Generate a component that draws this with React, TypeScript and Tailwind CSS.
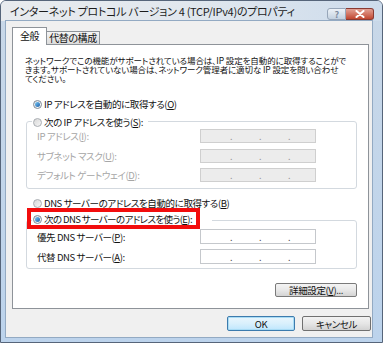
import React from "react";

function Radio({ on }: { on?: boolean }) {
  return (
    <span
      className={
        on
          ? "flex h-[9px] w-[9px] shrink-0 items-center justify-center rounded-full border border-[#7f8a96] bg-gradient-to-br from-[#dfe3e8] to-[#ffffff]"
          : "flex h-[9px] w-[9px] shrink-0 items-center justify-center rounded-full border border-[#a9adb2] bg-gradient-to-br from-[#d8d8d8] to-[#f6f6f6]"
      }
    >
      {on && <span className="h-[5px] w-[5px] rounded-full bg-gradient-to-br from-[#7ccaf5] to-[#1a5ea8]" />}
    </span>
  );
}

function IpField({ dim, tall }: { dim?: boolean; tall?: boolean }) {
  const base = dim
    ? "flex w-[116px] shrink-0 items-end gap-[27px] border border-[#cfcfcf] bg-[#ececec] pb-[1px] pl-[29px] text-[9px] leading-[9px] text-[#9a9a9a]"
    : "flex w-[116px] shrink-0 items-end gap-[27px] border border-[#c5c8cc] bg-white pb-[1px] pl-[29px] text-[9px] leading-[9px] text-[#555]";
  return (
    <div className={base + (tall ? " h-[15px]" : " h-[14px]")}>
      <span className="w-[2px]">.</span>
      <span className="w-[2px]">.</span>
      <span className="w-[2px]">.</span>
    </div>
  );
}

function Key({ k }: { k: string }) {
  return <span className="underline decoration-[0.5px] underline-offset-[1px]">{k}</span>;
}

function Row({ label, dim, tall, mt }: { label: React.ReactNode; dim?: boolean; tall?: boolean; mt: string }) {
  return (
    <div className={"flex items-center " + mt}>
      <span className={dim ? "w-[173px] shrink-0 pl-[10px] text-[#a6a6a6]" : "w-[173px] shrink-0 pl-[10px] text-[#111]"}>{label}</span>
      <IpField dim={dim} tall={tall} />
    </div>
  );
}

export default function App() {
  return (
    <div className="h-[343px] w-[383px] overflow-hidden whitespace-nowrap bg-white font-['Noto_Sans_CJK_JP','Noto_Sans',sans-serif] text-[9.5px] leading-[12px] tracking-[-0.4px] text-[#111] [font-feature-settings:'palt']">
      <div className="flex h-full w-full flex-col rounded-t-[6px] border border-[#56657a] bg-gradient-to-b from-[#c9d8e8] to-[#bcd3ec]">
        {/* title bar */}
        <div className="flex h-[20px] shrink-0 items-start rounded-t-[5px] bg-gradient-to-r from-[#e8ebee] via-[#e1e7ee] to-[#cddcec] pl-[9px] pr-[8px]">
          <span className="mt-[3px] min-w-0 overflow-hidden text-[11px] leading-[14px] tracking-[-0.3px] text-[#1c1c1c]">
            インターネット プロトコル バージョン 4 (TCP/IPv4)のプロパティ
          </span>
          <div className="ml-auto mt-[7px] flex shrink-0">
            <div className="flex h-[12px] w-[19px] items-center justify-center rounded-l-[3px] border border-[#97a6b9] bg-gradient-to-b from-[#eef3f8] to-[#c3d1e0] text-[9px] font-bold leading-[9px] text-[#7d8ca0]">
              ?
            </div>
            <div className="flex h-[12px] w-[28px] items-center justify-center rounded-r-[3px] border border-l-0 border-[#8a3a32] bg-gradient-to-b from-[#e2a195] to-[#c0452f]">
              <svg width="10" height="8" viewBox="0 0 10 8">
                <path d="M1.5 1 L8.5 7 M8.5 1 L1.5 7" stroke="#ffffff" strokeWidth="2" strokeLinecap="round" />
              </svg>
            </div>
          </div>
        </div>

        {/* frame around client */}
        <div className="flex flex-1 pb-[5px] pl-[5px] pr-[10px]">
          <div className="flex w-full flex-col bg-[#f0f0f0] pl-[6px] pr-[3px] pt-[6px] shadow-[0_0_0_1px_#93aac3]">
            {/* tabs */}
            <div className="relative z-10 -mb-px flex h-[18px] items-end">
              <div className="flex h-[18px] w-[35px] items-center justify-center border border-b-0 border-[#8e9399] bg-white pb-[1px] text-[10px] text-[#111]">
                全般
              </div>
              <div className="flex h-[14px] w-[53px] items-center justify-center border border-l-0 border-[#8e9399] bg-gradient-to-b from-[#f4f4f4] to-[#dcdcdc] text-[10px] text-[#111]">
                代替の構成
              </div>
            </div>

            {/* panel */}
            <div className="relative flex h-[265px] flex-col border border-[#8e9399] bg-white pl-[12px] pr-[11px] pt-[11px]">
              <div className="h-[27px] text-[8.5px] leading-[9px] tracking-[-0.1px]">
                <div>ネットワークでこの機能がサポートされている場合は、IP 設定を自動的に取得することがで</div>
                <div>きます。サポートされていない場合は、ネットワーク管理者に適切な IP 設定を問い合わせ</div>
                <div>てください。</div>
              </div>

              <div className="mt-[16px] flex h-[10px] items-center gap-[2px] pl-[8px]">
                <Radio on />
                <span>
                  IP アドレスを自動的に取得する(<Key k="O" />)
                </span>
              </div>

              {/* IP group */}
              <div className="relative ml-[1px] mt-[12px] flex flex-col rounded-[3px] border border-[#d3d9df] pb-[6px] pt-[7px]">
                <div className="absolute left-[5px] top-[-6px] flex h-[12px] w-[116px] items-center gap-[2px] bg-white pl-[1px]">
                  <Radio />
                  <span>
                    次の IP アドレスを使う(<Key k="S" />):
                  </span>
                </div>
                <Row dim mt="" label={<>IP アドレス(<Key k="I" />):</>} />
                <Row dim mt="mt-[6px]" label={<>サブネット マスク(<Key k="U" />):</>} />
                <Row dim mt="mt-[5px]" label={<>デフォルト ゲートウェイ(<Key k="D" />):</>} />
              </div>

              <div className="mt-[9px] flex h-[10px] items-center gap-[2px] pl-[8px]">
                <Radio />
                <span>
                  DNS サーバーのアドレスを自動的に取得する(<Key k="B" />)
                </span>
              </div>

              {/* DNS group */}
              <div className="relative ml-[1px] mt-[12px] flex flex-col rounded-[3px] border border-[#d3d9df] pb-[4px] pt-[8px]">
                <div className="absolute left-[5px] top-[-8px] flex h-[12px] w-[180px] items-center gap-[2px] bg-white pl-[1px] tracking-[-0.6px]">
                  <Radio on />
                  <span>
                    次の DNS サーバーのアドレスを使う(<Key k="E" />):
                  </span>
                </div>
                <Row tall mt="" label={<>優先 DNS サーバー(<Key k="P" />):</>} />
                <Row tall mt="mt-[5px]" label={<>代替 DNS サーバー(<Key k="A" />):</>} />
              </div>

              <button className="mt-[14px] flex h-[14px] w-[82px] items-center justify-center self-end rounded-[2px] border border-[#7a7a7a] bg-gradient-to-b from-[#f4f4f4] via-[#e8e8e8] to-[#d4d4d4] text-[9.5px] leading-[10px] text-[#111]">
                詳細設定(<Key k="V" />)...
              </button>

              {/* annotation */}
              <div className="absolute left-[14px] top-[163px] h-[21px] w-[173px] border-[4px] border-[#f20d0d]" />
            </div>

            {/* bottom buttons */}
            <div className="-mr-[2px] mt-[7px] flex justify-end gap-[7px]">
              <button className="flex h-[15px] w-[68px] items-center justify-center rounded-[2px] border border-[#3d7bad] bg-gradient-to-b from-[#eaf6fd] via-[#d9f0fc] to-[#bee6fd] text-[9.5px] leading-[10px] text-[#111] shadow-[inset_0_0_0_1px_#a9dcf5]">
                OK
              </button>
              <button className="flex h-[15px] w-[69px] items-center justify-center rounded-[2px] border border-[#707070] bg-gradient-to-b from-[#f2f2f2] via-[#e6e6e6] to-[#d2d2d2] text-[9.5px] leading-[10px] text-[#111]">
                キャンセル
              </button>
            </div>
          </div>
        </div>
      </div>
    </div>
  );
}
